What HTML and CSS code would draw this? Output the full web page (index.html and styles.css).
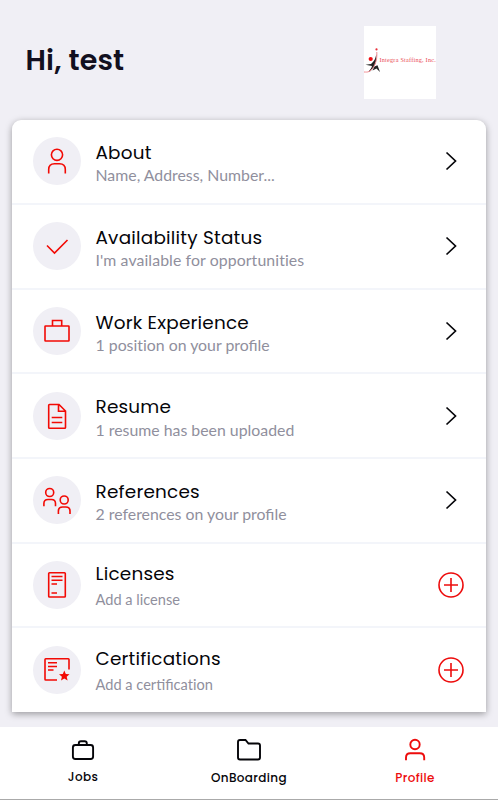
FILE: index.html
```html
<!DOCTYPE html>
<html lang="en">
<head>
<meta charset="utf-8">
<title>Profile</title>
<link rel="stylesheet" href="styles.css">
</head>
<body>
<header class="header">
  <h1 class="greeting">Hi, test</h1>
  <div class="logo">
    <svg width="16" height="26" viewBox="0 0 16 26">
      <circle cx="6.700" cy="12" r="2.100" fill="#f00d12"/>
      <circle cx="12.500" cy="2.400" r="1.100" fill="#e8303a"/>
      <path d="M12.300 7C13 13 11.500 20 6 24.500L4.500 24.500C7 22 7.500 21 8 19L1.500 17.800 7 17C10 14.500 11.500 12 12.300 7Z" fill="#222"/>
      <path d="M10.500 19.500L13.500 18.200 16 25 12.500 21.500 8.500 23.500Z" fill="#222"/>
      <path d="M12.800 5C13.500 14 10 22 5 24.500 3.500 25.300 2 25 0 25" fill="none" stroke="#f28d93" stroke-width="1"/>
    </svg>
    <span class="logo-name">Integra Staffing, Inc.</span>
  </div>
</header>
<main class="card">
  <section class="row">
    <span class="disc"><svg class="icon" viewBox="0 0 48 48"><circle cx="24" cy="17.800" r="5.600"/><path d="M15.700 36.500V32.500Q15.700 26.700 21.500 26.700H26.500Q32.300 26.700 32.300 32.500V36.500"/></svg></span>
    <div class="text"><h2 class="title">About</h2><p class="sub">Name, Address, Number...</p></div>
    <svg class="chevron" viewBox="0 0 26 26"><path d="M8.500 4.500L17.500 13 8.500 21.500"/></svg>
  </section>
  <section class="row">
    <span class="disc"><svg class="icon" viewBox="0 0 48 48"><path d="M14 23.500L21.500 31 34.500 18"/></svg></span>
    <div class="text"><h2 class="title">Availability Status</h2><p class="sub sub-wide">I'm available for opportunities</p></div>
    <svg class="chevron" viewBox="0 0 26 26"><path d="M8.500 4.500L17.500 13 8.500 21.500"/></svg>
  </section>
  <section class="row">
    <span class="disc"><svg class="icon" viewBox="0 0 48 48"><rect x="12" y="19" width="24" height="15" rx=".5"/><path d="M19.500 19V13.500H28.700V19"/></svg></span>
    <div class="text"><h2 class="title">Work Experience</h2><p class="sub">1 posi<span class="plain">t</span>ion on your profile</p></div>
    <svg class="chevron" viewBox="0 0 26 26"><path d="M8.500 4.500L17.500 13 8.500 21.500"/></svg>
  </section>
  <section class="row">
    <span class="disc"><svg class="icon" viewBox="0 0 48 48"><path d="M16.500 12.500H26L32.500 19V35.500Q32.500 36.300 31.700 36.300H16.500Q15.700 36.300 15.700 35.500V13.300Q15.700 12.500 16.500 12.500ZM25.500 12.500V19.300H32.500M18.700 25.500H29.300M18.700 30.500H29.300"/></svg></span>
    <div class="text"><h2 class="title">Resume</h2><p class="sub">1 resume has been uploaded</p></div>
    <svg class="chevron" viewBox="0 0 26 26"><path d="M8.500 4.500L17.500 13 8.500 21.500"/></svg>
  </section>
  <section class="row">
    <span class="disc"><svg class="icon" viewBox="0 0 48 48"><circle cx="16.700" cy="16.500" r="4"/><circle cx="31.200" cy="24" r="4"/><path d="M10.900 30.300V27.500Q10.900 23.500 15 23.500H18.500Q22.500 23.500 22.500 27.500V30.300M25.400 38V35Q25.400 31 29.500 31H33Q37 31 37 35V38"/></svg></span>
    <div class="text"><h2 class="title">References</h2><p class="sub">2 references on your profile</p></div>
    <svg class="chevron" viewBox="0 0 26 26"><path d="M8.500 4.500L17.500 13 8.500 21.500"/></svg>
  </section>
  <section class="row">
    <span class="disc"><svg class="icon" viewBox="0 0 48 48"><rect x="15.700" y="11.700" width="16.600" height="24.300" rx=".8"/><path d="M18.500 15.500H29.500M18.500 19.300H29.500M18.500 23H24M18.500 32H24"/></svg></span>
    <div class="text"><h2 class="title title-add">Licenses</h2><p class="sub sub-add">Add a license</p></div>
    <svg class="plus" viewBox="0 0 26 26"><circle cx="13" cy="13" r="12"/><path d="M6 13H20M13 6V20"/></svg>
  </section>
  <section class="row">
    <span class="disc"><svg class="icon" viewBox="0 0 48 48"><path d="M24 34H12.700Q12 34 12 33.300V13.500Q12 12.800 12.700 12.800H35.300Q36 12.800 36 13.500V23.500M15 16.700H24M15 20.500H24M15 24H20.500"/><path class="solid" d="M31.300 24.500L32.800 27.900 36.500 28.300 33.700 30.700 34.600 34.400 31.300 32.400 28 34.400 28.900 30.700 26 28.300 29.800 27.900Z"/></svg></span>
    <div class="text"><h2 class="title title-add">Certifications</h2><p class="sub sub-add">Add a certifica<span class="plain">t</span>ion</p></div>
    <svg class="plus" viewBox="0 0 26 26"><circle cx="13" cy="13" r="12"/><path d="M6 13H20M13 6V20"/></svg>
  </section>
</main>
<nav class="tabs">
  <div class="tab">
    <svg class="tab-icon" viewBox="0 0 26 26"><rect x="2.900" y="8" width="20.200" height="14" rx="2.500"/><path d="M8.800 8V6.500Q8.800 4.200 11 4.200H14.600Q16.800 4.200 16.800 6.500V8"/></svg>
    <span class="tab-label">Jobs</span>
  </div>
  <div class="tab">
    <svg class="tab-icon" viewBox="0 0 26 26"><path d="M4 3H9.500L12.500 6.500H22Q24 6.500 24 8.500V20.500Q24 22.500 22 22.500H4Q2 22.500 2 20.500V5Q2 3 4 3Z"/></svg>
    <span class="tab-label label-low">OnBoarding</span>
  </div>
  <div class="tab active">
    <svg class="tab-icon" viewBox="0 0 26 26"><circle cx="13" cy="7.500" r="4.700"/><path d="M4 23.200V20.500Q4 16.200 8.300 16.200H17.800Q22.200 16.200 22.200 20.500V23.200"/></svg>
    <span class="tab-label label-low">Profile</span>
  </div>
</nav>
</body>
</html>
```
FILE: styles.css
```css
* { box-sizing: border-box; }
body {
  margin: 0;
  height: 800px;
  overflow: hidden;
  display: flex;
  flex-direction: column;
  background: #f0eff5;
  font-family: Poppins, Inter, sans-serif;
  color: #050509;
}
h1, h2, p { margin: 0; }
.header {
  height: 119.500px;
  flex: none;
  padding: 26px 62px 0 25.500px;
  display: flex;
  justify-content: space-between;
}
.greeting {
  margin-top: 16px;
  font-size: 28.500px;
  letter-spacing: .15px;
  line-height: 36px;
  font-weight: 600;
  color: #12101f;
}
.logo {
  width: 72.500px;
  height: 72.500px;
  background: #fff;
  display: flex;
  align-items: flex-start;
  padding-top: 21px;
  overflow: hidden;
}
.logo svg { flex: none; }
.logo-name {
  font: 6.200px/8px "Liberation Serif", serif;
  letter-spacing: .23px;
  color: #ea4a55;
  white-space: nowrap;
  margin-top: 9px;
}
.card {
  flex: none;
  width: 474px;
  height: 592.500px;
  margin-left: 12px;
  background: #fff;
  border-radius: 9px 9px 0 0;
  box-shadow: 0 2px 7px rgba(0, 0, 0, .36);
}
.row {
  height: 84.700px;
  border-bottom: 2px solid #f3f5fa;
  display: flex;
  align-items: center;
  padding: 0 22px 0 21px;
}
.row:first-child { height: 85.500px; }
.row:last-child { border-bottom: 0; height: 83px; }
.disc { width: 48px; height: 48px; border-radius: 50%; background: #f0eff5; }
.icon { display: block; width: 48px; height: 48px; fill: none; stroke: #f20a05; stroke-width: 1.600; }
.icon .solid { fill: #f20a05; stroke: none; }
.text { flex: 1; margin-left: 14.500px; height: 50px; }
.title { font-size: 18.400px; letter-spacing: .22px; line-height: 26px; font-weight: 400; margin-top: 3.600px; white-space: nowrap; }
.sub { font: 15.850px/20px Lato, sans-serif; color: #908f9d; white-space: nowrap; margin-top: -.600px; }
.sub-wide { letter-spacing: .09px; }
.plain { font-variant-ligatures: none; }
.title-add { margin-top: 1px; }
.sub-add { font-size: 14.600px; margin-top: 3px; }
.chevron, .plus { width: 26px; height: 26px; fill: none; }
.chevron { stroke: #050509; stroke-width: 1.700; }
.plus { stroke: #ed0c0c; stroke-width: 1.600; }
.tabs {
  margin-top: 15px;
  height: 73px;
  flex: none;
  background: #fff;
  border-bottom: 1px solid #aaa;
  display: grid;
  grid-template-columns: repeat(3, 1fr);
}
.tab { display: flex; flex-direction: column; align-items: center; padding-top: 10px; }
.tab-icon { width: 26px; height: 26px; fill: none; stroke: currentColor; stroke-width: 1.900; }
.tab-label { font-size: 12px; letter-spacing: .35px; line-height: 16px; font-weight: 500; margin-top: 6px; }
.label-low { margin-top: 7px; }
.active { color: #ed0c0c; }
```
